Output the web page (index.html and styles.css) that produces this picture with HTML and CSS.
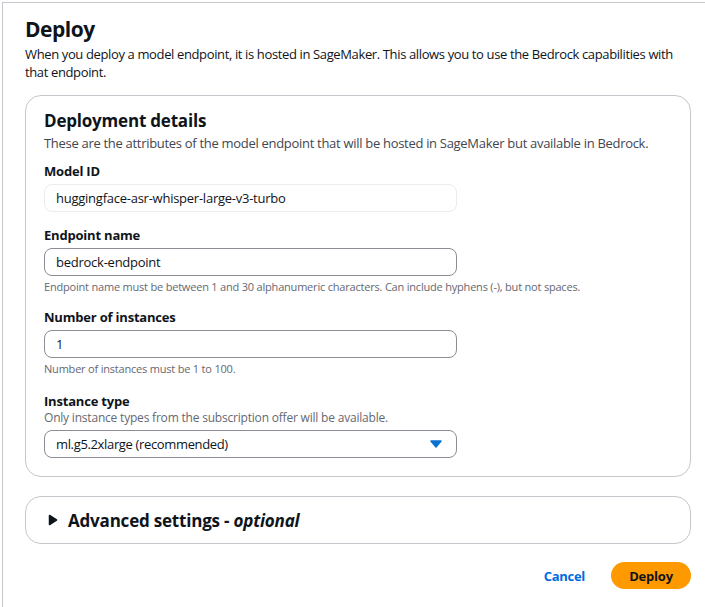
FILE: index.html
```html
<!DOCTYPE html>
<html>
<head>
<meta charset="utf-8">
<link rel="stylesheet" href="styles.css">
</head>
<body>
<div class="frame">
  <div class="page">
    <h1 class="title">Deploy</h1>
    <p class="lead">When you deploy a model endpoint, it is hosted in SageMaker. This allows you to use the Bedrock capabilities with that endpoint.</p>

    <section class="card">
      <h2 class="card-title">Deployment details</h2>
      <p class="card-desc">These are the attributes of the model endpoint that will be hosted in SageMaker but available in Bedrock.</p>

      <div class="field first">
        <div class="label">Model ID</div>
        <div class="input disabled">huggingface-asr-whisper-large-v3-turbo</div>
      </div>

      <div class="field">
        <div class="label">Endpoint name</div>
        <div class="input">bedrock-endpoint</div>
        <div class="hint">Endpoint name must be between 1 and 30 alphanumeric characters. Can include hyphens (-), but not spaces.</div>
      </div>

      <div class="field">
        <div class="label">Number of instances</div>
        <div class="input">1</div>
        <div class="hint">Number of instances must be 1 to 100.</div>
      </div>

      <div class="field last">
        <div class="label">Instance type</div>
        <div class="sub">Only instance types from the subscription offer will be available.</div>
        <div class="input select">
          <span>ml.g5.2xlarge (recommended)</span>
          <svg class="caret" width="12" height="8" viewBox="0 0 12 8"><path d="M1 1 L11 1 L6 7 Z" fill="#0972d3" stroke="#0972d3" stroke-width="1.5" stroke-linejoin="round"/></svg>
        </div>
      </div>
    </section>

    <section class="card expander">
      <svg class="tri" width="10" height="12" viewBox="0 0 10 12"><path d="M1.5 1.5 L8.5 6 L1.5 10.5 Z" fill="#0f141a" stroke="#0f141a" stroke-width="1.5" stroke-linejoin="round"/></svg>
      <span class="exp-title">Advanced settings - <em>optional</em></span>
    </section>

    <div class="actions">
      <button class="link-btn">Cancel</button>
      <button class="primary-btn">Deploy</button>
    </div>
  </div>
</div>
</body>
</html>
```

FILE: styles.css
```css
* { box-sizing: border-box; }
html, body { margin: 0; padding: 0; background: #fff; }
body {
  font-family: "Open Sans", "Noto Sans", sans-serif;
  color: #0f141a;
  overflow: hidden;
  width: 705px;
  height: 607px;
}
.frame {
  margin: 2px 0 0 2px;
  border-top: 1px solid #c6c6cd;
  border-left: 1px solid #c6c6cd;
  height: 605px;
  width: 703px;
}
.page {
  width: 688px;
  padding: 12px 0 0 22px;
}
.title {
  margin: 0;
  font-size: 21px;
  line-height: 28px;
  font-weight: 700;
  letter-spacing: -0.5px;
}
.lead {
  margin: 2px 0 0 0;
  font-size: 13px;
  line-height: 18px;
  letter-spacing: -0.37px;
  color: #0f141a;
}
.card {
  border: 1px solid #c6c6cd;
  border-radius: 16px;
  margin-top: 14px;
  padding: 14px 18px 18px 18px;
}
.card-title {
  margin: 0;
  font-size: 17px;
  line-height: 22px;
  font-weight: 700;
  letter-spacing: -0.2px;
}
.card-desc {
  margin: 2px 0 0 0;
  font-size: 13px;
  line-height: 18px;
  letter-spacing: -0.3px;
  color: #424650;
}
.field { margin-top: 14px; }
.field.first { margin-top: 10px; }
.field.last { margin-top: 16px; }
.label {
  font-size: 13px;
  line-height: 18px;
  font-weight: 700;
  letter-spacing: -0.2px;
}
.sub {
  font-size: 12px;
  line-height: 16px;
  letter-spacing: -0.2px;
  color: #656871;
}
.input {
  margin-top: 4px;
  width: 413px;
  height: 28px;
  border: 1px solid #8c8c94;
  border-radius: 8px;
  padding: 0 11px;
  font-size: 13px;
  line-height: 26px;
  letter-spacing: -0.25px;
  color: #0f141a;
}
.input.disabled {
  border-color: #ebebf0;
  background: #fff;
}
.select {
  display: flex;
  align-items: center;
  justify-content: space-between;
  padding-right: 14px;
}
.select span { letter-spacing: -0.35px; }
.caret { display: block; }
.hint {
  margin-top: 4px;
  font-size: 11px;
  line-height: 14px;
  letter-spacing: -0.2px;
  color: #656871;
}
.expander {
  margin-top: 19px;
  height: 48px;
  padding: 0 0 0 22px;
  display: flex;
  align-items: center;
  gap: 10px;
}
.tri { display: block; }
.exp-title {
  font-size: 17px;
  font-weight: 700;
  letter-spacing: -0.2px;
}
.exp-title em { font-style: italic; }
.actions {
  margin-top: 18px;
  display: flex;
  justify-content: flex-end;
  align-items: center;
  gap: 22px;
}
.link-btn {
  border: none;
  background: none;
  font-family: inherit;
  font-size: 13px;
  font-weight: 700;
  letter-spacing: -0.3px;
  color: #006ce0;
  padding: 0 4px;
}
.primary-btn {
  border: none;
  background: #ff9900;
  border-radius: 20px;
  height: 27px;
  width: 80px;
  font-family: inherit;
  font-size: 13px;
  font-weight: 700;
  letter-spacing: -0.2px;
  color: #0f141a;
}
```
